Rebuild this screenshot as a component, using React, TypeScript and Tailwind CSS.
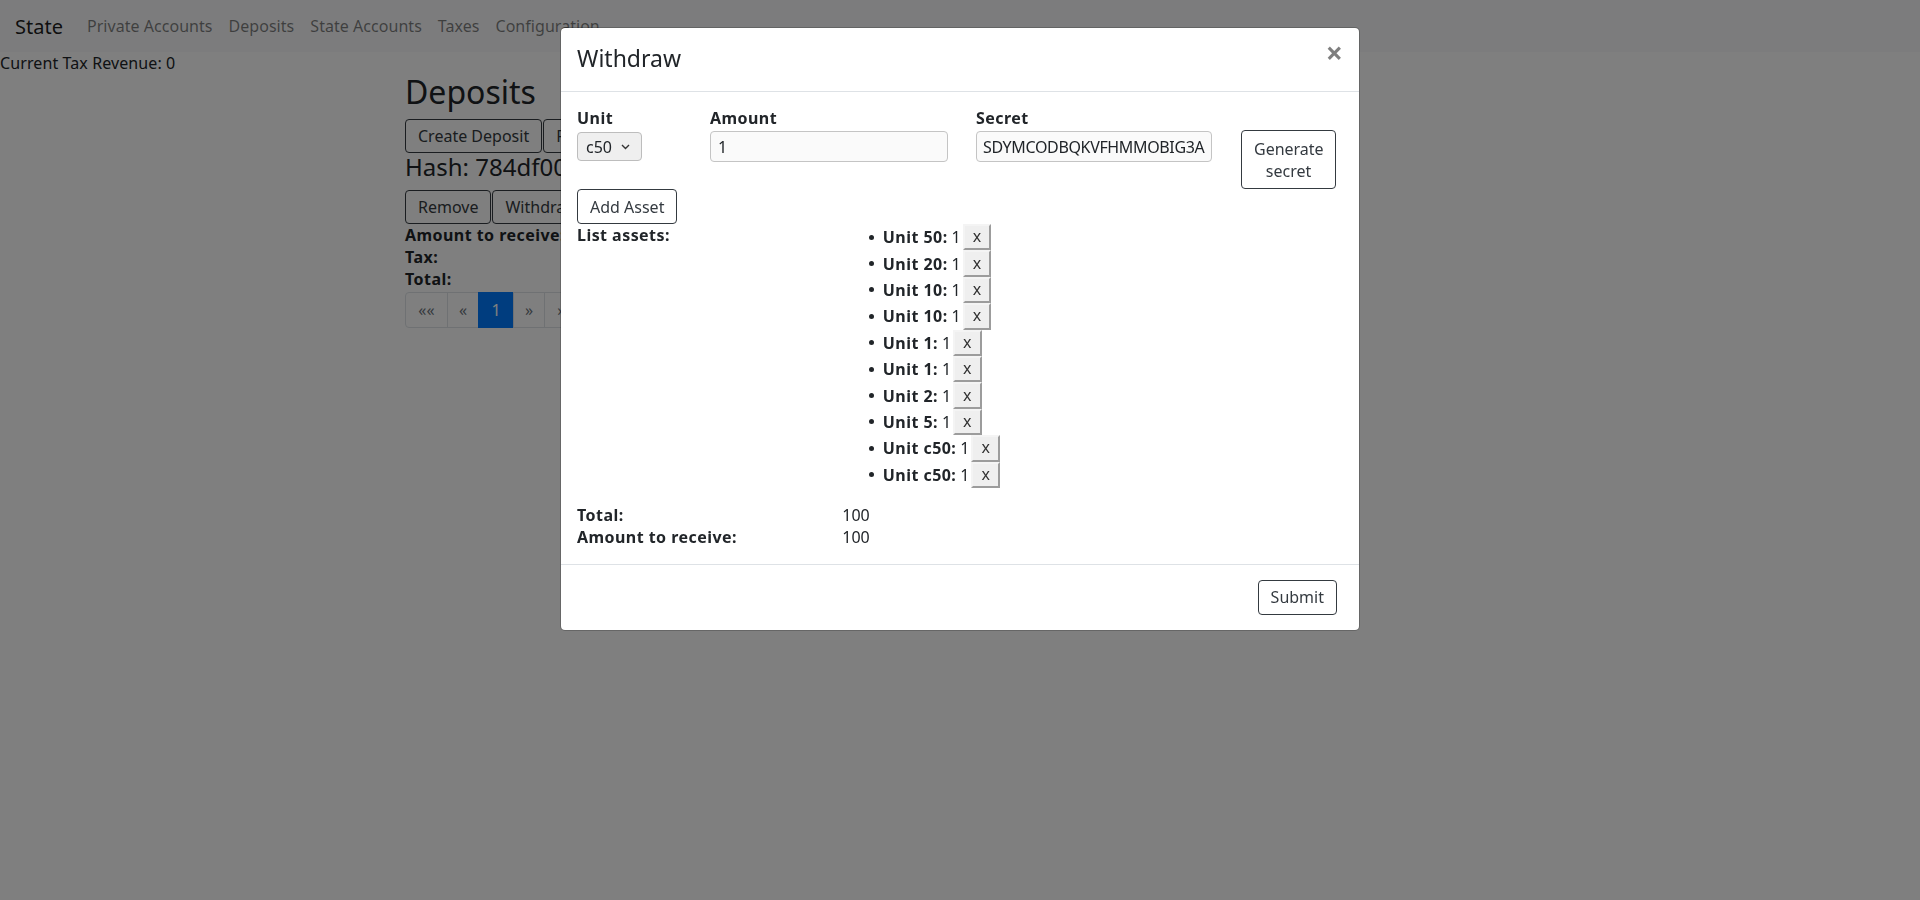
import React from "react";

const assets = ["50", "20", "10", "10", "1", "1", "2", "5", "c50", "c50"];
const navLinks = ["Private Accounts", "Deposits", "State Accounts", "Taxes", "Configuration"];

function PageButton({ children }: { children: React.ReactNode }) {
  return (
    <button className="flex h-[34px] items-center rounded-[4px] border border-[#343a40] bg-white px-[12px] text-[16px] text-[#343a40]">
      {children}
    </button>
  );
}

function ModalButton({ children, className = "" }: { children: React.ReactNode; className?: string }) {
  return (
    <button
      className={`rounded-[4px] border border-[#343a40] bg-white px-[12px] text-[16px] leading-[normal] text-[#343a40] ${className}`}
    >
      {children}
    </button>
  );
}

export default function App() {
  return (
    <div className="relative h-[900px] overflow-hidden bg-white font-['Noto_Sans',sans-serif] text-[16px] leading-[normal] text-[#212529]">
      {/* Navbar */}
      <nav className="flex h-[52px] items-center bg-[#f8f9fa] px-[15px]">
        <span className="mr-[16px] text-[20px] text-[rgba(0,0,0,0.9)]">State</span>
        {navLinks.map((l) => (
          <span key={l} className="px-[8px] text-[16px] tracking-[0.04px] text-[rgba(0,0,0,0.5)]">
            {l}
          </span>
        ))}
      </nav>
      <div className="tracking-[0.1px]">Current Tax Revenue: 0</div>

      {/* Page content */}
      <div className="mx-auto w-[1140px] px-[15px]">
        <h2 className="-mt-[1px] mb-[8px] text-[32px] leading-[1.2] font-normal">Deposits</h2>
        <div className="flex gap-px">
          <PageButton>Create Deposit</PageButton>
          <PageButton>Refresh</PageButton>
        </div>
        <h4 className="mb-[8px] text-[24px] leading-[1.2] font-normal">Hash: 784df00a3c9e1b7f</h4>
        <div className="flex gap-px">
          <PageButton>Remove</PageButton>
          <PageButton>Withdraw</PageButton>
        </div>
        <div className="font-bold tracking-[0.45px]">Amount to receive:</div>
        <div className="font-bold tracking-[0.45px]">Tax:</div>
        <div className="font-bold tracking-[0.45px]">Total:</div>
        <div className="mt-[2px] flex h-[36px] text-[16px]">
          <span className="flex w-[43px] items-center justify-center rounded-l-[4px] border border-[#dee2e6] text-[#6c757d]">««</span>
          <span className="-ml-px flex w-[32px] items-center justify-center border border-[#dee2e6] text-[#6c757d]">«</span>
          <span className="-ml-px flex w-[36px] items-center justify-center border border-[#007bff] bg-[#007bff] text-white">1</span>
          <span className="-ml-px flex w-[32px] items-center justify-center border border-[#dee2e6] text-[#6c757d]">»</span>
          <span className="-ml-px flex w-[43px] items-center justify-center rounded-r-[4px] border border-[#dee2e6] text-[#6c757d]">»»</span>
        </div>
      </div>

      {/* Backdrop */}
      <div className="fixed inset-0 bg-[rgba(0,0,0,0.5)]" />

      {/* Modal */}
      <div className="fixed inset-0 flex justify-center">
        <div className="mt-[27px] h-fit w-[800px] rounded-[5px] border border-[rgba(0,0,0,0.2)] bg-white bg-clip-padding">
          {/* Header */}
          <div className="flex items-start justify-between border-b border-[#dee2e6] px-[16px] pt-[15px] pb-[18px]">
            <h4 className="text-[23px] leading-[30px] font-normal">Withdraw</h4>
            <span className="-mt-[5px] text-[30px] leading-none font-bold text-black opacity-50">×</span>
          </div>

          {/* Body */}
          <div className="px-[16px] pt-[15px] pb-[16px]">
            <div className="flex items-start">
              <div className="w-[133px]">
                <div className="font-bold tracking-[0.45px]">Unit</div>
                <div className="mt-[3px] flex h-[29px] w-[65px] items-center rounded-[4px] border border-[#bdbdbd] bg-[#efefef] pl-[8px]">
                  <span>c50</span>
                  <svg className="ml-[9px]" width="9" height="6" viewBox="0 0 9 6" fill="none">
                    <path d="M1 1l3.5 3.5L8 1" stroke="#333" strokeWidth="1.4" />
                  </svg>
                </div>
              </div>
              <div className="w-[266px]">
                <div className="font-bold tracking-[0.45px]">Amount</div>
                <input
                  readOnly
                  value="1"
                  className="mt-[2px] h-[31px] w-[238px] rounded-[4px] border border-[#c4c4c4] bg-[#fafafa] px-[7px] text-[16px] outline-none"
                />
              </div>
              <div className="w-[265px]">
                <div className="font-bold tracking-[0.45px]">Secret</div>
                <input
                  readOnly
                  value="SDYMCODBQKVFHMMOBIG3A"
                  className="mt-[2px] h-[31px] w-[236px] rounded-[4px] border border-[#c4c4c4] bg-[#fafafa] px-[6px] text-[16px] tracking-[-0.35px] outline-none"
                />
              </div>
              <div>
                <ModalButton className="mt-[23px] h-[59px] w-[95px] px-0">
                  Generate
                  <br />
                  secret
                </ModalButton>
              </div>
            </div>

            <ModalButton className="h-[35px]">Add Asset</ModalButton>

            <div className="flex">
              <div className="w-[265.3px] font-bold tracking-[0.45px]">List assets:</div>
              <ul className="mb-[16px]">
                {assets.map((a, i) => (
                  <li key={i} className="flex h-[26.4px] items-center">
                    <span className="ml-[26.5px] h-[5px] w-[5px] rounded-full bg-[#212529]" />
                    <span className="ml-[9px] font-bold tracking-[0.45px]">Unit {a}:</span>
                    <span className="ml-[4px]">1</span>
                    <button className="ml-[2px] flex h-[26.4px] w-[28.4px] items-center justify-center border-2 border-t-[#f4f4f4] border-r-[#9c9c9c] border-b-[#9c9c9c] border-l-[#f4f4f4] bg-[#efefef] pb-[2px] text-[16px] text-[#333]">
                      x
                    </button>
                  </li>
                ))}
              </ul>
            </div>

            <div className="flex">
              <div className="w-[265.3px] font-bold tracking-[0.45px]">Total:</div>
              <div>100</div>
            </div>
            <div className="flex">
              <div className="w-[265.3px] font-bold tracking-[0.45px]">Amount to receive:</div>
              <div>100</div>
            </div>
          </div>

          {/* Footer */}
          <div className="flex justify-end border-t border-[#dee2e6] py-[15px] pr-[22px]">
            <ModalButton className="h-[35px]">Submit</ModalButton>
          </div>
        </div>
      </div>
    </div>
  );
}
